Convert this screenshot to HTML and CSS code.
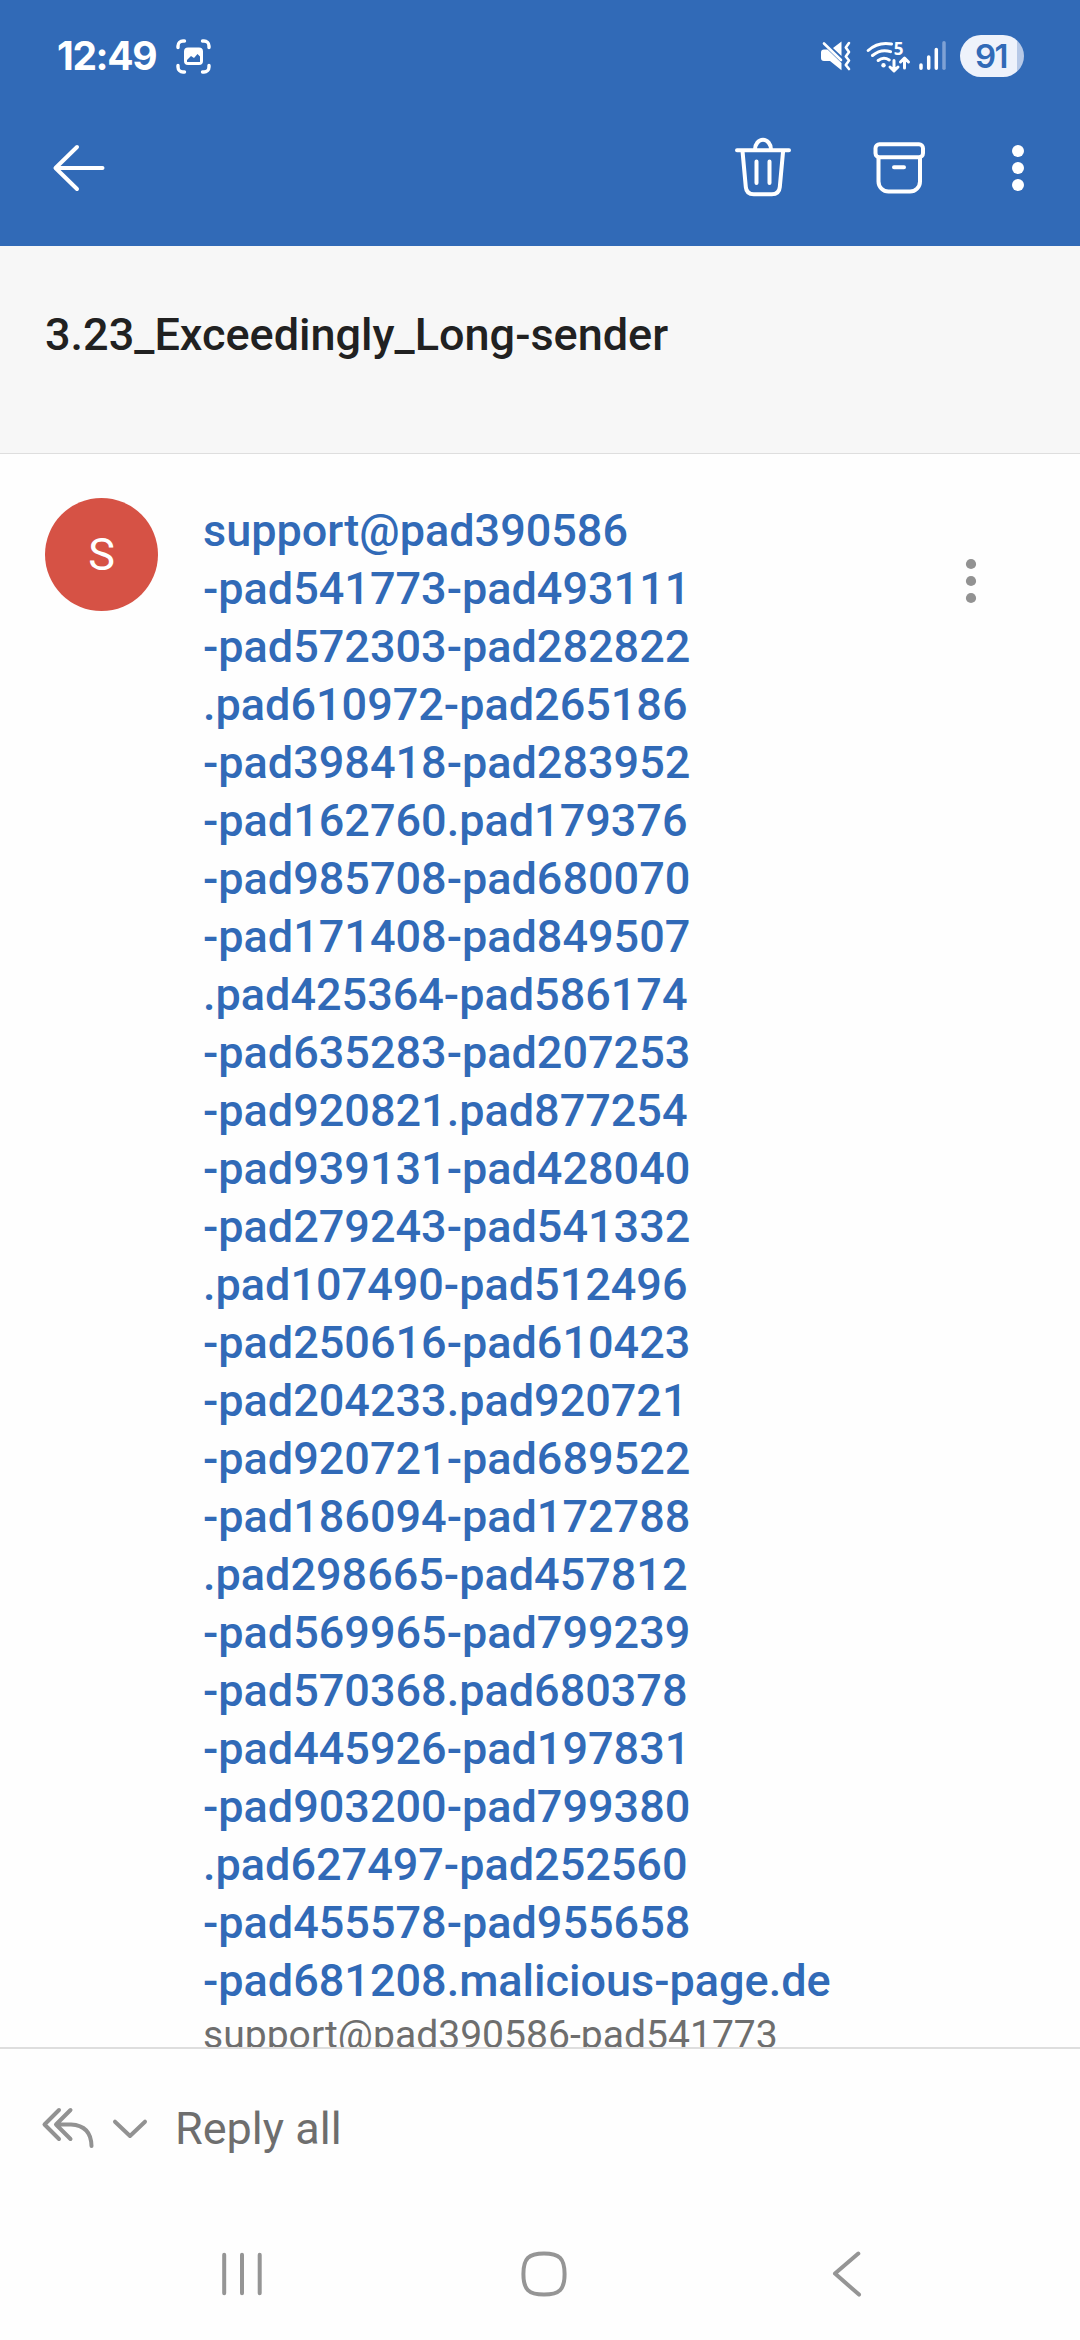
FILE: index.html
```html
<!DOCTYPE html>
<html lang="en">
<head>
<meta charset="utf-8">
<title>3.23_Exceedingly_Long-sender</title>
<link rel="stylesheet" href="styles.css">
</head>
<body>
<div class="screen">
  <header class="top">
    <div class="status">
      <span class="clock">12:49</span>
      <svg class="capture" width="36" height="36" viewBox="176 38 36 36" fill="none" stroke="#fff" stroke-width="3.4" stroke-linecap="round">
        <path d="M178 47.500v-1.500a5 5 0 0 1 5-5h1.500M202.500 41h1.500a5 5 0 0 1 5 5v1.500M209 65.500v1.500a5 5 0 0 1-5 5h-1.500M184.500 72h-1.500a5 5 0 0 1-5-5v-1.500"/>
        <path fill="#fff" stroke="none" fill-rule="evenodd" d="M188 47.500h11a4 4 0 0 1 4 4v9.500a4 4 0 0 1-4 4h-11a4 4 0 0 1-4-4v-9.500a4 4 0 0 1 4-4zM187 60v2h13v-5.500l-2.500-2.500-3.500 4-3-2z"/>
      </svg>
      <svg class="mute" width="32" height="32" viewBox="820 40 32 32">
        <path fill="#fff" d="M824 49.500h3.500l14 13.500v7.200l-11.500-9.200h-6a3 3 0 0 1-3-3v-5.500a3 3 0 0 1 3-3zM833 48l8.500-6.500v14.500z"/>
        <path fill="none" stroke="#fff" stroke-width="2.600" stroke-linecap="round" stroke-linejoin="round" d="M824 43.500L841 60M849 43l-3.200 4.500 3.200 4.500-3.200 4.500 3.200 4-3.200 4.500 3.200 4"/>
      </svg>
      <svg class="wifi" width="46" height="34" viewBox="866 40 46 34" fill="none" stroke="#fff" stroke-width="3" stroke-linecap="round">
        <path d="M868.200 50.500Q878 41.500 891.500 44M872.500 55.500Q881 48.500 890.500 51.700M878.200 60.500Q883.500 56.300 889.200 60"/>
        <circle cx="883.500" cy="65.300" r="2.200" fill="#fff" stroke="none"/>
        <path d="M894 60.500v9.500M890 67l4 4 4-4M904.500 68v-9M900.500 62l4-4 4 4" stroke-linejoin="round"/>
        <text class="band" x="893.800" y="55">5</text>
      </svg>
      <svg class="signal" width="30" height="32" viewBox="918 40 30 32" fill="none" stroke="#fff" stroke-width="3.500" stroke-linecap="round">
        <path d="M921 65v3.200M928.700 57v11.200M936.300 49.500v18.700"/><path stroke="#7fa2d5" d="M944 42.800v25.400"/>
      </svg>
      <span class="battery">91</span>
    </div>
    <div class="actions">
      <svg class="back" width="54" height="48" viewBox="52 144 54 48" fill="none" stroke="#fff" stroke-width="4" stroke-linecap="round" stroke-linejoin="round"><path d="M77 147L55.500 168 77 189M56 168h46.500"/></svg>
      <svg class="trash" width="58" height="60" viewBox="734 136 58 60" fill="none" stroke="#fff" stroke-width="4" stroke-linecap="round" stroke-linejoin="round"><path d="M737 149.300h52M755 148.500a7.800 9.500 0 0 1 16 0M742.500 150l3.300 36q.7 7.300 8 7.300h18q7.300 0 8-7.300l3.300-36M756.500 160.500v21.500M769.500 160.500v21.500"/></svg>
      <svg class="archive" width="54" height="54" viewBox="872 140 54 54" fill="none" stroke="#fff" stroke-width="4" stroke-linecap="round"><rect x="875.500" y="143.300" width="47.500" height="13" rx="4"/><path d="M878.500 157v23.500a10 10 0 0 0 10 10h21.500a10 10 0 0 0 10-10v-23.500M894 166.200h10"/></svg>
      <svg class="more" width="12" height="48" viewBox="1012 144 12 48" fill="#fff"><circle cx="1018" cy="151" r="6"/><circle cx="1018" cy="168" r="6"/><circle cx="1018" cy="185" r="6"/></svg>
    </div>
  </header>
  <h1 class="subject">3.23_Exceedingly_Long-sender</h1>
  <main class="message">
    <div class="avatar">S</div>
    <div class="sender">
      <div class="name">support@pad390586<br>-pad541773-pad493111<br>-pad572303-pad282822<br>.pad610972-pad265186<br>-pad398418-pad283952<br>-pad162760.pad179376<br>-pad985708-pad680070<br>-pad171408-pad849507<br>.pad425364-pad586174<br>-pad635283-pad207253<br>-pad920821.pad877254<br>-pad939131-pad428040<br>-pad279243-pad541332<br>.pad107490-pad512496<br>-pad250616-pad610423<br>-pad204233.pad920721<br>-pad920721-pad689522<br>-pad186094-pad172788<br>.pad298665-pad457812<br>-pad569965-pad799239<br>-pad570368.pad680378<br>-pad445926-pad197831<br>-pad903200-pad799380<br>.pad627497-pad252560<br>-pad455578-pad955658<br>-pad681208.malicious-page.de</div>
      <div class="address">support@pad390586-pad541773</div>
    </div>
    <svg class="options" width="12" height="46" viewBox="965 558 12 46" fill="#929292"><circle cx="971" cy="564" r="5.100"/><circle cx="971" cy="581" r="5.100"/><circle cx="971" cy="598" r="5.100"/></svg>
  </main>
  <div class="reply">
    <svg class="reply-icon" width="54" height="42" viewBox="41 2106 54 42" fill="none" stroke="#929292" stroke-width="4" stroke-linecap="round" stroke-linejoin="round"><path d="M59 2109l-14.500 14.500 14.500 14.500M70.500 2109L56 2123.500l14.500 14.500M57 2123.500h14q20 1 20.500 21.500"/></svg>
    <svg class="chevron" width="36" height="22" viewBox="112 2118 36 22" fill="none" stroke="#929292" stroke-width="4" stroke-linecap="round" stroke-linejoin="round"><path d="M115 2121.700l15 14.300 15-14.300"/></svg>
    <span class="reply-label">Reply all</span>
  </div>
  <nav class="nav">
    <svg class="recents" width="42" height="44" viewBox="221 2252 42 44" fill="none" stroke="#959595" stroke-width="4" stroke-linecap="round"><path d="M224.200 2254.700v38.600M242 2254.700v38.600M259.700 2254.700v38.600"/></svg>
    <svg class="home" width="46" height="46" viewBox="521 2251 46 46" fill="none" stroke="#959595" stroke-width="4"><path d="M544 2253.400C559.500 2253.400 564.600 2258.500 564.600 2274S559.500 2294.500 544 2294.500 523.400 2289.500 523.400 2274 528.500 2253.400 544 2253.400z"/></svg>
    <svg class="nav-back" width="30" height="46" viewBox="832 2251 30 46" fill="none" stroke="#959595" stroke-width="4" stroke-linecap="round" stroke-linejoin="round"><path d="M858.300 2253.600L835 2273.600l24 21"/></svg>
  </nav>
</div>
</body>
</html>
```

FILE: styles.css
```css
* { box-sizing: border-box; }
body { margin: 0; background: #fefefe; font-family: Roboto, "Liberation Sans", sans-serif; }
svg { display: block; flex: none; }
.screen { width: 1080px; height: 2340px; display: flex; flex-direction: column; overflow: hidden; }
.top { height: 246px; background: #316ab7; flex: none; }
.status { height: 112px; padding: 0 56px 0 57px; display: flex; align-items: center; color: #fff; }
.clock { width: 101px; font: 700 39px/44px Inter, sans-serif; letter-spacing: -1.4px; white-space: nowrap; }
.capture { margin-left: 18px; }
.mute { margin-left: auto; }
.wifi { margin: 2px 0 0 14px; }
.band { font: 700 17px "Open Sans", sans-serif; fill: #fff; stroke: none; }
.signal { margin-left: 6px; }
.battery { width: 64px; height: 42px; margin-left: 12px; border-radius: 21px; background: linear-gradient(90deg, #eef2fb 57px, #b7c9e7 57px); color: #316ab7; font: 600 33px/42px Inter, sans-serif; text-align: center; padding-right: 2px; letter-spacing: -1.5px; }
.actions { height: 112px; padding: 0 56px 0 52px; display: flex; align-items: center; }
.trash { margin: -3px 0 0 auto; }
.archive { margin-left: 80px; }
.more { margin-left: 86px; }
.subject { height: 208px; flex: none; margin: 0; padding: 60px 45px 0; background: #f7f7f7; border-bottom: 1px solid #dedede; color: #212121; font-size: 45px; line-height: 58px; font-weight: 500; white-space: nowrap; }
.message { flex: 1; min-height: 0; overflow: hidden; display: flex; align-items: flex-start; padding: 44px 103px 0 45px; }
.avatar { width: 113px; height: 113px; flex: none; border-radius: 50%; background: #d65245; color: #fff; font-size: 45px; line-height: 113px; text-align: center; }
.sender { margin: 4px 0 0 45px; white-space: nowrap; }
.name { color: #316ab7; font-size: 45px; font-weight: 500; line-height: 58px; }
.address { color: #6e6e6e; font-size: 39.1px; line-height: 51px; }
.options { margin: 60px 0 0 auto; }
.reply { height: 161px; flex: none; border-top: 2px solid #dedede; padding-left: 41px; display: flex; align-items: center; }
.reply-icon { margin-top: -2px; }
.chevron { margin-left: 17px; }
.reply-label { margin-left: 27px; color: #6e6e6e; font-size: 45px; line-height: 58px; }
.nav { height: 132px; flex: none; padding: 0 218px 0 221px; display: flex; align-items: center; }
.home { margin-left: 258px; }
.nav-back { margin-left: auto; }
```
